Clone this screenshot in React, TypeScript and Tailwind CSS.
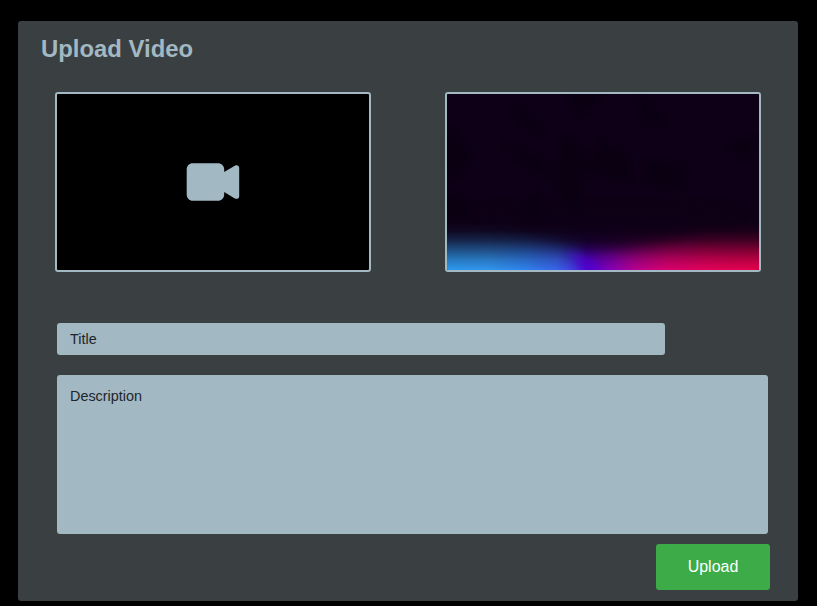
function VideoIcon() {
  return (
    <svg width="54" height="38" viewBox="0 0 54 38" fill="#a2b8c3" aria-hidden="true">
      <path d="M6.8 .3H31.9C35.5 .3 38.2 3 38.2 6.6V9L48.8 2.7C50.9 1.5 53.2 2.7 53.2 4.9V33.2C53.2 35.4 50.9 36.6 48.8 35.4L38.2 29V31.4C38.2 35 35.5 37.7 31.9 37.7H6.8C3.3 37.7 .7 35 .7 31.4V6.6C.7 3 3.3 .3 6.8 .3Z" />
    </svg>
  );
}

function Thumbnail() {
  return (
    <svg className="block h-full w-full" viewBox="0 0 312 176" preserveAspectRatio="none" aria-hidden="true">
      <defs>
        <linearGradient id="hues" x1="0" x2="312" y1="0" y2="0" gradientUnits="userSpaceOnUse">
          <stop offset="0" stopColor="#2c98ec" />
          <stop offset=".13" stopColor="#3196ed" />
          <stop offset=".25" stopColor="#2f83ee" />
          <stop offset=".35" stopColor="#3865ea" />
          <stop offset=".41" stopColor="#4435df" />
          <stop offset=".45" stopColor="#5700d2" />
          <stop offset=".52" stopColor="#8300b8" />
          <stop offset=".6" stopColor="#b60092" />
          <stop offset=".7" stopColor="#d90070" />
          <stop offset=".83" stopColor="#e3005a" />
          <stop offset="1" stopColor="#e5004c" />
        </linearGradient>
        <linearGradient id="fade" x1="0" x2="0" y1="127" y2="176" gradientUnits="userSpaceOnUse">
          <stop offset="0" stopColor="white" stopOpacity="0" />
          <stop offset=".2" stopColor="white" stopOpacity=".06" />
          <stop offset=".4" stopColor="white" stopOpacity=".25" />
          <stop offset=".6" stopColor="white" stopOpacity=".53" />
          <stop offset=".8" stopColor="white" stopOpacity=".8" />
          <stop offset="1" stopColor="white" />
        </linearGradient>
        <mask id="glow" maskUnits="userSpaceOnUse" x="0" y="120" width="312" height="56">
          <path fill="url(#fade)" d="M0 120H312V176H0Z" />
        </mask>
        <filter id="soft" x="-20%" y="-50%" width="140%" height="200%" colorInterpolationFilters="sRGB">
          <feGaussianBlur stdDeviation="16 6" />
        </filter>
        <filter id="smoke" x="-30%" y="-30%" width="160%" height="160%" colorInterpolationFilters="sRGB">
          <feGaussianBlur stdDeviation="3" />
        </filter>
      </defs>
      <path fill="#0e0016" d="M0 0H312V176H0Z" />
      <path fill="#06000e" opacity=".5" filter="url(#smoke)" d="M65 12L78 20L96 39L82 35ZM124 0L154 3L132 20ZM192 5L218 26L199 27ZM0 34L22 60L14 77L0 84ZM56 50L91 66L104 81L89 76ZM117 41L145 70L156 47L178 63L182 85L132 76L129 119L112 94ZM199 67L236 74L233 94L200 87ZM0 99L20 108L19 119L0 122ZM86 96L96 126L78 133ZM281 53L306 43L300 64Z" />
      <path fill="url(#hues)" mask="url(#glow)" d="M0 120H312V176H0Z" />
      <path fill="#0e0016" opacity=".6" filter="url(#soft)" d="M45 115L72 136Q100 144 122 152Q150 158 187 153Q220 147 250 136L275 115Z" />
      <path fill="#5000ce" opacity=".45" filter="url(#smoke)" d="M119 156L147 166L155 180H138Z" />
    </svg>
  );
}

export default function App() {
  return (
    <main className="h-[606px] w-full overflow-hidden bg-black pt-[21px] pl-[18px] font-['Liberation_Sans',Arial,sans-serif]">
      <section className="flex h-[580px] w-[780px] flex-col rounded-[3px] bg-[#3a3f41]">
        <h1 className="ml-[23px] h-[71px] pt-3 text-[23.9px] leading-8 font-bold text-[#a2b8c3]">Upload Video</h1>
        <div className="ml-[37px] flex gap-[74px]">
          <button type="button" aria-label="Choose video" className="flex h-[180px] w-[316px] items-center justify-center rounded-[3px] border-2 border-[#a2b8c3] bg-black">
            <VideoIcon />
          </button>
          <div className="h-[180px] w-[316px] overflow-hidden rounded-[3px] border-2 border-[#a2b8c3]">
            <Thumbnail />
          </div>
        </div>
        <input placeholder="Title" className="mt-[51px] ml-[39px] h-8 w-[608px] shrink-0 rounded-[3px] bg-[#a2b8c3] px-[13px] text-[14.4px] text-[#212529] outline-none placeholder:text-[#212529]" />
        <textarea placeholder="Description" className="mt-5 ml-[39px] h-[159px] w-[711px] shrink-0 resize-none rounded-[3px] bg-[#a2b8c3] px-[13px] pt-[10px] text-[14.4px] leading-[22px] text-[#212529] outline-none placeholder:text-[#212529]" />
        <button type="button" className="mt-[10px] mr-7 h-[46px] w-[114px] shrink-0 self-end rounded-[3px] bg-[#3cab48] text-base text-white">Upload</button>
      </section>
    </main>
  );
}
